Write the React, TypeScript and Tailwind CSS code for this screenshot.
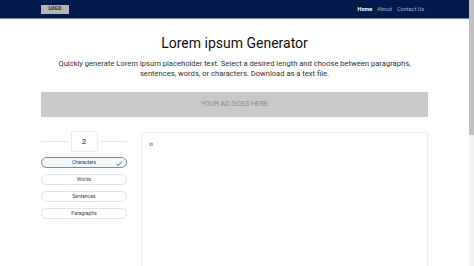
import React from "react";

const font = { fontFamily: "Roboto, 'Liberation Sans', sans-serif" };

function Option({ label, active }: { label: string; active?: boolean }) {
  return (
    <div
      className={
        "relative flex h-[11px] items-center justify-center rounded-full border text-[5px] leading-none " +
        (active
          ? "border-[#7a8a96] bg-[#f3f8fb] text-[#1c3f5a]"
          : "border-[#e2e2e2] bg-white text-[#444]")
      }
    >
      {label}
      {active && (
        <svg
          className="absolute right-[4px] top-[2.5px]"
          width="6"
          height="5"
          viewBox="0 0 12 10"
          fill="none"
          stroke="#2b4f6a"
          strokeWidth="1.6"
          strokeLinecap="round"
          strokeLinejoin="round"
        >
          <path d="M1 5.5 L4.5 9 L11 1.5" />
        </svg>
      )}
    </div>
  );
}

export default function App() {
  return (
    <div className="flex h-[266px] w-full overflow-hidden bg-white" style={font}>
      <div className="flex min-w-0 flex-1 flex-col">
        <header className="h-[19px] shrink-0 border-b border-[#6f7f9f] bg-[#001a4d]">
          <div className="mx-auto flex h-full w-[387px] items-center justify-between">
            <div className="flex h-[9px] w-[28px] items-center justify-center bg-[#b5b5b5] text-[5px] font-bold text-[#222]">
              LOGO
            </div>
            <nav className="mr-[4px] flex items-center gap-[5px] text-[5.5px]">
              <span className="font-bold text-white">Home</span>
              <span className="text-[#aab4c8]">About</span>
              <span className="text-[#aab4c8]">Contact Us</span>
            </nav>
          </div>
        </header>
        <main className="mx-auto flex w-[387px] flex-col items-center">
          <h1 className="mt-[15px] text-[14px] leading-[18px] text-[#111]">
            Lorem ipsum Generator
          </h1>
          <p className="mt-[7px] w-[380px] text-center text-[7.6px] leading-[10px] text-[#333]">
            Quickly generate Lorem Ipsum placeholder text. Select a desired length and choose between paragraphs, sentences, words, or characters. Download as a text file.
          </p>
          <div className="mt-[13px] flex h-[25px] w-full items-center justify-center bg-[#c9c9c9] text-[7px] text-[#8a8a8a]">
            YOUR AD GOES HERE
          </div>
          <div className="mt-[14px] flex w-full gap-[14px]">
            <div className="flex w-[86px] shrink-0 flex-col">
              <div className="flex items-center gap-[3px]">
                <div className="h-px flex-1 bg-[#e6e6e6]" />
                <div className="flex h-[21px] w-[27px] items-center justify-center border border-[#ececec] text-[8px] text-[#222]">
                  2
                </div>
                <div className="h-px flex-1 bg-[#e6e6e6]" />
              </div>
              <div className="mt-[5px] flex flex-col gap-[6px]">
                <Option label="Characters" active />
                <Option label="Words" />
                <Option label="Sentences" />
                <Option label="Paragraphs" />
              </div>
            </div>
            <div className="mt-[1px] h-[200px] flex-1 rounded-[2px] border border-[#ebebeb] bg-white px-[7px] py-[8px] text-[5px] text-[#555]">
              lo
            </div>
          </div>
        </main>
      </div>
      <div className="flex w-[5px] shrink-0 flex-col bg-[#f1f1f1]">
        <div className="h-[135px] bg-[#c1c1c1]" />
      </div>
    </div>
  );
}
